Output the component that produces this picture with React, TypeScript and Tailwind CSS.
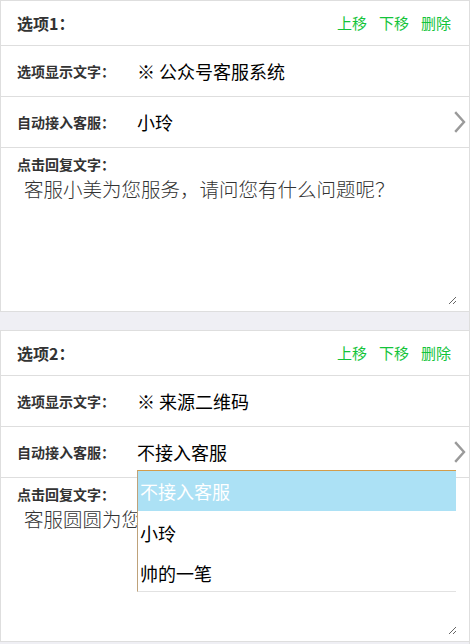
import { useState } from 'react';

interface OptionItem {
  id: number;
  display: string;
  agent: string;
  reply: string;
}

const agents = ['不接入客服', '小玲', '帅的一笔'];

const initialItems: OptionItem[] = [
  { id: 1, display: '※ 公众号客服系统', agent: '小玲', reply: '客服小美为您服务，请问您有什么问题呢？' },
  { id: 2, display: '※ 来源二维码', agent: '不接入客服', reply: '客服圆圆为您服务，请问您有什么问题呢？' },
];

function Chevron() {
  return (
    <svg width="12" height="22" viewBox="0 0 12 22" fill="none" className="absolute right-[3px] top-1/2 -translate-y-1/2">
      <path d="M2 2 L10 11 L2 20" stroke="#9a9a9a" strokeWidth="2.4" strokeLinecap="square" />
    </svg>
  );
}

function OptionCard({ item, index, open }: { item: OptionItem; index: number; open: boolean }) {
  const [reply, setReply] = useState(item.reply);

  return (
    <div className="bg-white border-l border-y border-[#dedede]">
      {/* Header */}
      <div className="h-[45px] flex items-center justify-between pl-4 pr-[18px] border-b border-[#dedede]">
        <span className="text-[16px] font-bold text-[#333]">选项{index + 1}：</span>
        <div className="flex gap-3 text-[15px] text-[#14c43a]">
          <button>上移</button>
          <button>下移</button>
          <button>删除</button>
        </div>
      </div>

      {/* Display text */}
      <div className="h-[51px] flex items-center pl-4 border-b border-[#dedede]">
        <span className="w-[120px] shrink-0 text-[14px] font-bold text-[#333]">选项显示文字：</span>
        <span className="text-[18px] text-black">{item.display}</span>
      </div>

      {/* Agent select */}
      <div className="relative h-[51px] flex items-center pl-4 border-b border-[#dedede]">
        <span className="w-[120px] shrink-0 text-[14px] font-bold text-[#333]">自动接入客服：</span>
        <span className="text-[18px] text-black">{item.agent}</span>
        <Chevron />
        {open && (
          <div className="absolute left-[136px] top-[43px] w-[319px] z-10 bg-white border-t border-l border-t-[#d39c4a] border-l-[#bfa27a] border-b border-b-[#e2e2e2]">
            {agents.map((a) => (
              <div
                key={a}
                className={`h-[40px] flex items-center pl-[2px] text-[18px] ${a === item.agent ? 'bg-[#ace1f5] text-white' : 'text-black pt-[4px]'}`}
              >
                {a}
              </div>
            ))}
          </div>
        )}
      </div>

      {/* Reply text */}
      <div className="h-[163px] pl-4 pt-[6px]">
        <div className="text-[14px] leading-[20px] font-bold text-[#333]">点击回复文字：</div>
        <textarea
          value={reply}
          onChange={(e) => setReply(e.target.value)}
          className="block ml-[5px] w-[435px] h-[131px] p-[2px] text-[19.5px] leading-[26px] text-[#333] font-light bg-transparent outline-none border-none resize-y"
          style={{ fontFamily: '"Noto Sans CJK SC", sans-serif' }}
        />
      </div>
    </div>
  );
}

export default function App() {
  return (
    <div
      className="w-[470px] min-h-[644px] bg-[#efeff4] border-r border-[#dedede]"
      style={{ fontFamily: '"Noto Sans CJK SC", "Noto Sans", sans-serif' }}
    >
      {initialItems.map((item, i) => (
        <div key={item.id} className={i > 0 ? 'mt-[18px]' : ''}>
          <OptionCard item={item} index={i} open={i === 1} />
        </div>
      ))}
    </div>
  );
}
